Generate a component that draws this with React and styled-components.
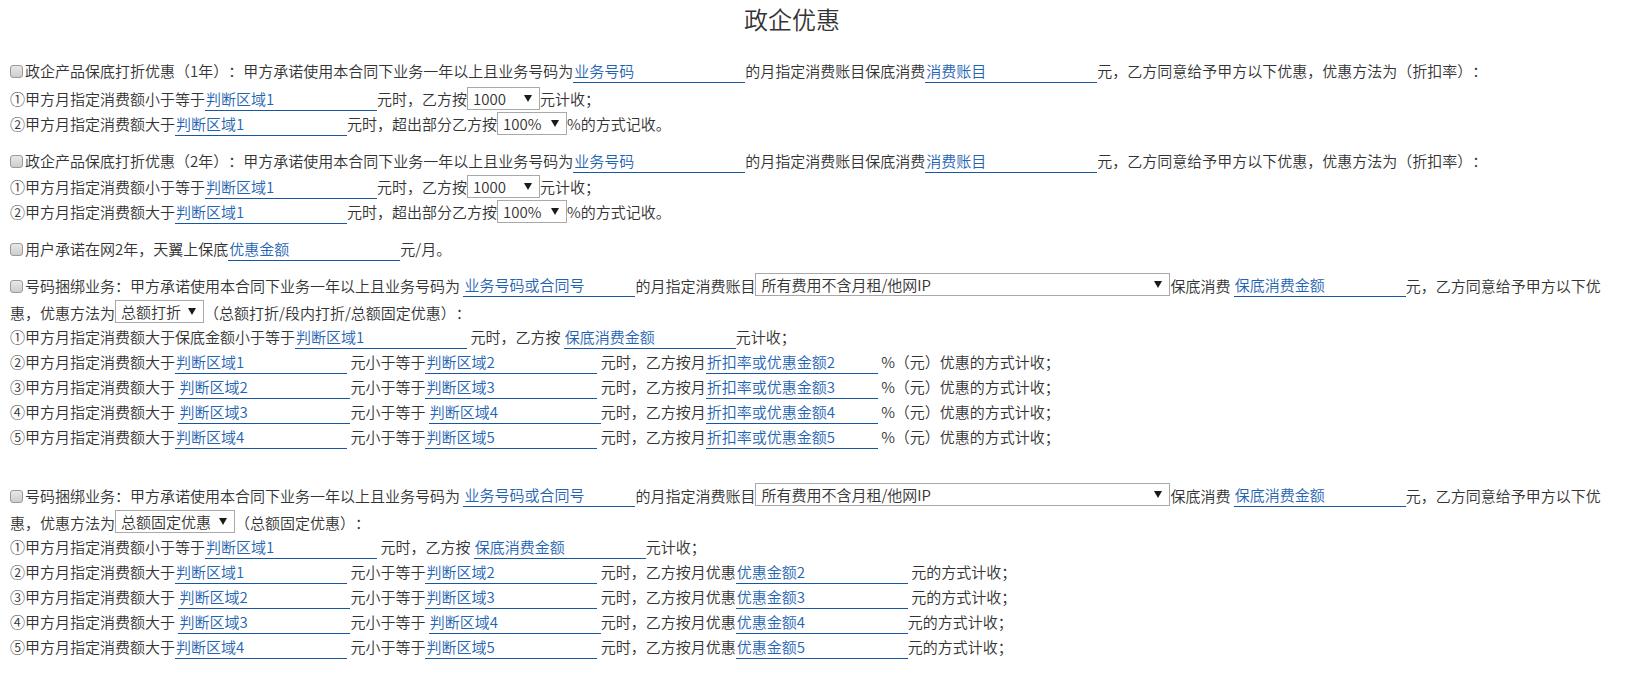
import React from "react";
import styled, { createGlobalStyle } from "styled-components";

const GlobalStyle = createGlobalStyle`
  body {
    margin: 0;
    background: #fff;
    font-family: "Noto Sans CJK SC", "Microsoft YaHei", sans-serif;
    font-size: 15px;
    font-weight: 350;
    color: #333;
    text-spacing-trim: space-all;
  }
`;

const Page = styled.div`
  padding: 0 20px 0 10px;
`;

const Title = styled.h2`
  margin: 0 0 20px;
  padding-right: 36px;
  line-height: 38px;
  font-size: 24px;
  font-weight: 350;
  text-align: center;
  color: #333;
`;

const Section = styled.div`
  margin-bottom: ${(p) => (p.$gap != null ? p.$gap : 12)}px;
`;

const Line = styled.div`
  line-height: ${(p) => p.$lh || 25}px;
  margin-bottom: ${(p) => p.$mb || 0}px;
`;

const Check = styled.input.attrs({ type: "checkbox" })`
  appearance: none;
  box-sizing: border-box;
  width: 13px;
  height: 13px;
  margin: 0 2px 0 0;
  border: 1px solid #9a9a9a;
  border-radius: 3px;
  background: linear-gradient(#e8e8e8, #cdcdcd);
  vertical-align: -1px;
`;

const Field = styled.input.attrs({ type: "text" })`
  box-sizing: border-box;
  width: ${(p) => p.$w || 172}px;
  height: 25px;
  margin: 0;
  padding: 0 1px;
  border: 0;
  border-bottom: 1px solid #1856a2;
  background: transparent;
  font: inherit;
  color: #1f64b3;
  vertical-align: top;
  outline: none;
`;

const DropWrap = styled.span`
  position: relative;
  display: inline-block;
  vertical-align: top;
  margin-top: 1px;
  line-height: 21px;

  &::after {
    content: "";
    position: absolute;
    right: 8px;
    top: 8px;
    border-left: 4px solid transparent;
    border-right: 4px solid transparent;
    border-top: 7px solid #1a1a1a;
    pointer-events: none;
  }
`;

const Select = styled.select`
  appearance: none;
  box-sizing: border-box;
  display: block;
  width: ${(p) => p.$w}px;
  height: 23px;
  padding: 0 18px 0 5px;
  border: 1px solid #a9a9a9;
  border-radius: 0;
  background: #fff;
  font: inherit;
  color: #333;
  outline: none;
`;

const Drop = ({ w, options }) => (
  <DropWrap>
    <Select $w={w} defaultValue={options[0]}>
      {options.map((o) => (
        <option key={o}>{o}</option>
      ))}
    </Select>
  </DropWrap>
);

const rateOptions = ["1000", "2000", "3000"];
const percentOptions = ["100%", "90%", "80%"];
const accountOptions = ["所有费用不含月租/他网IP", "所有费用"];

const App = () => {
  return (
    <Page>
      <GlobalStyle />
      <Title>政企优惠</Title>

      <Section>
        <Line $mb={3}>
          <Check />
          政企产品保底打折优惠（1年）：甲方承诺使用本合同下业务一年以上且业务号码为
          <Field defaultValue="业务号码" />
          的月指定消费账目保底消费
          <Field defaultValue="消费账目" />
          元，乙方同意给予甲方以下优惠，优惠方法为（折扣率）：
        </Line>
        <Line>
          ①甲方月指定消费额小于等于<Field defaultValue="判断区域1" />
          元时，乙方按<Drop w={73} options={rateOptions} />元计收；
        </Line>
        <Line>
          ②甲方月指定消费额大于<Field defaultValue="判断区域1" />
          元时，超出部分乙方按<Drop w={70} options={percentOptions} />%的方式记收。
        </Line>
      </Section>

      <Section>
        <Line $mb={1}>
          <Check />
          政企产品保底打折优惠（2年）：甲方承诺使用本合同下业务一年以上且业务号码为
          <Field defaultValue="业务号码" />
          的月指定消费账目保底消费
          <Field defaultValue="消费账目" />
          元，乙方同意给予甲方以下优惠，优惠方法为（折扣率）：
        </Line>
        <Line>
          ①甲方月指定消费额小于等于<Field defaultValue="判断区域1" />
          元时，乙方按<Drop w={73} options={rateOptions} />元计收；
        </Line>
        <Line>
          ②甲方月指定消费额大于<Field defaultValue="判断区域1" />
          元时，超出部分乙方按<Drop w={70} options={percentOptions} />%的方式记收。
        </Line>
      </Section>

      <Section $gap={11}>
        <Line>
          <Check />
          用户承诺在网2年，天翼上保底<Field defaultValue="优惠金额" />元/月。
        </Line>
      </Section>

      <Section $gap={33}>
        <Line $lh={27} $mb={-2}>
          <Check />
          号码捆绑业务：甲方承诺使用本合同下业务一年以上且业务号码为{" "}
          <Field defaultValue="业务号码或合同号" />
          的月指定消费账目<Drop w={415} options={accountOptions} />
          保底消费{" "}
          <Field defaultValue="保底消费金额" />
          元，乙方同意给予甲方以下优惠，优惠方法为
          <Drop w={89} options={["总额打折", "段内打折", "总额固定优惠"]} />
          （总额打折/段内打折/总额固定优惠）：
        </Line>
        <Line>
          ①甲方月指定消费额大于保底金额小于等于<Field defaultValue="判断区域1" />
          {" "}元时，乙方按{" "}
          <Field defaultValue="保底消费金额" />
          元计收；
        </Line>
        <Line>
          ②甲方月指定消费额大于<Field defaultValue="判断区域1" />
          {" "}元小于等于<Field defaultValue="判断区域2" />
          {" "}元时，乙方按月<Field defaultValue="折扣率或优惠金额2" />
          {" "}%（元）优惠的方式计收；
        </Line>
        <Line>
          ③甲方月指定消费额大于{" "}
          <Field defaultValue="判断区域2" />
          元小于等于<Field defaultValue="判断区域3" />
          {" "}元时，乙方按月<Field defaultValue="折扣率或优惠金额3" />
          {" "}%（元）优惠的方式计收；
        </Line>
        <Line>
          ④甲方月指定消费额大于{" "}
          <Field defaultValue="判断区域3" />
          元小于等于{" "}
          <Field defaultValue="判断区域4" />
          元时，乙方按月<Field defaultValue="折扣率或优惠金额4" />
          {" "}%（元）优惠的方式计收；
        </Line>
        <Line>
          ⑤甲方月指定消费额大于<Field defaultValue="判断区域4" />
          {" "}元小于等于<Field defaultValue="判断区域5" />
          {" "}元时，乙方按月<Field defaultValue="折扣率或优惠金额5" />
          {" "}%（元）优惠的方式计收；
        </Line>
      </Section>

      <Section>
        <Line $lh={27} $mb={-2}>
          <Check />
          号码捆绑业务：甲方承诺使用本合同下业务一年以上且业务号码为{" "}
          <Field defaultValue="业务号码或合同号" />
          的月指定消费账目<Drop w={415} options={accountOptions} />
          保底消费{" "}
          <Field defaultValue="保底消费金额" />
          元，乙方同意给予甲方以下优惠，优惠方法为
          <Drop w={120} options={["总额固定优惠", "总额打折", "段内打折"]} />
          （总额固定优惠）：
        </Line>
        <Line>
          ①甲方月指定消费额小于等于<Field defaultValue="判断区域1" />
          {" "}元时，乙方按{" "}
          <Field defaultValue="保底消费金额" />
          元计收；
        </Line>
        <Line>
          ②甲方月指定消费额大于<Field defaultValue="判断区域1" />
          {" "}元小于等于<Field defaultValue="判断区域2" />
          {" "}元时，乙方按月优惠<Field defaultValue="优惠金额2" />
          {" "}元的方式计收；
        </Line>
        <Line>
          ③甲方月指定消费额大于{" "}
          <Field defaultValue="判断区域2" />
          元小于等于<Field defaultValue="判断区域3" />
          {" "}元时，乙方按月优惠<Field defaultValue="优惠金额3" />
          {" "}元的方式计收；
        </Line>
        <Line>
          ④甲方月指定消费额大于{" "}
          <Field defaultValue="判断区域3" />
          元小于等于{" "}
          <Field defaultValue="判断区域4" />
          元时，乙方按月优惠<Field defaultValue="优惠金额4" />
          元的方式计收；
        </Line>
        <Line>
          ⑤甲方月指定消费额大于<Field defaultValue="判断区域4" />
          {" "}元小于等于<Field defaultValue="判断区域5" />
          {" "}元时，乙方按月优惠<Field defaultValue="优惠金额5" />
          元的方式计收；
        </Line>
      </Section>
    </Page>
  );
};

export default App;
